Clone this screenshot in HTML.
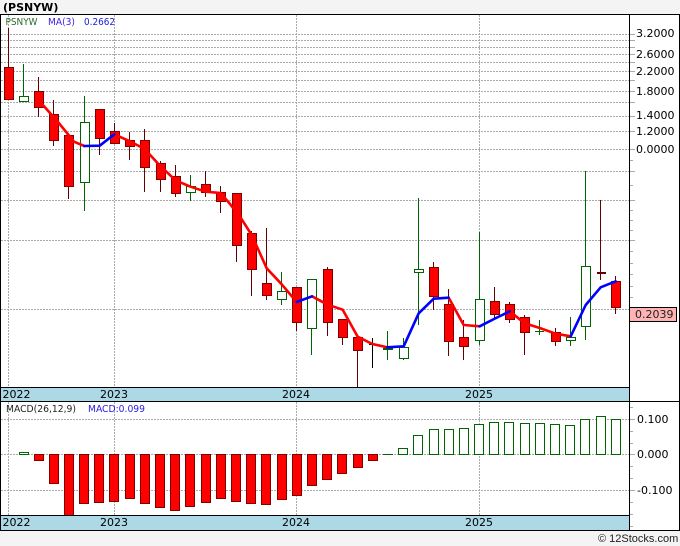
<!DOCTYPE html>
<html>
<head>
<meta charset="utf-8">
<style>
html,body{margin:0;padding:0;width:680px;height:546px;overflow:hidden;background:#f4f4f4}
svg{display:block}
text{font-family:"DejaVu Sans","Liberation Sans",sans-serif;font-size:11px;fill:#000}
.s{font-family:"DejaVu Sans Condensed","DejaVu Sans",sans-serif;font-size:10px}
</style>
</head>
<body>
<svg width="680" height="546" viewBox="0 0 680 546" xmlns="http://www.w3.org/2000/svg">
<rect x="0" y="0" width="680" height="546" fill="#f4f4f4"/>
<rect x="0" y="14" width="680" height="517" fill="#fff"/>
<rect x="0" y="388" width="630" height="13" fill="#add8e6"/>
<rect x="0" y="516" width="630" height="14" fill="#add8e6"/>

<g shape-rendering="crispEdges" fill="none">
<path stroke="#aaa" stroke-dasharray="2 1" d="M1 34.5H630M1 40.5H630M1 47.5H630M1 54.5H630M1 62.5H630M1 71.5H630M1 80.5H630M1 91.5H630M1 102.5H630M1 116.5H630M1 131.5H630M1 149.5H630M1 171.5H630M1 200.5H630M1 240.5H630M1 309.5H630M1 419.5H630M1 454.5H630M1 490.5H630"/>
<path stroke="#aaa" stroke-dasharray="2 1" d="M8.5 15V387M114.5 15V387M296.5 15V387M479.5 15V387M8.5 402V515M114.5 402V515M296.5 402V515M479.5 402V515"/>
<path stroke="#aaa" d="M630 34.5h5M630 40.5h5M630 47.5h5M630 54.5h5M630 62.5h5M630 71.5h5M630 80.5h5M630 91.5h5M630 102.5h5M630 116.5h5M630 131.5h5M630 149.5h5M630 160.5h3M630 171.5h5M630 185.5h3M630 200.5h5M630 210.5h3M630 220.5h3M630 230.5h3M630 240.5h5M630 251.5h3M630 263.5h3M630 274.5h3M630 286.5h3M630 297.5h3M630 309.5h5M630 407.5h3M630 419.5h5M630 431.5h3M630 443.5h3M630 454.5h5M630 466.5h3M630 478.5h3M630 490.5h5M630 502.5h3M630 514.5h3M630 526.5h3"/>

<!-- wicks -->
<path stroke="#660000" d="M8.5 28V99M38.5 77V117M53.5 100V146M68.5 133V199M99.5 109V155M114.5 123V144M129.5 132V160M144.5 129V192M160.5 161V192M175.5 165V197M205.5 171V197M220.5 186V213M236.5 193V262M251.5 231V296M266.5 228V300M296.5 287V331M327.5 267V336M342.5 319V345M357.5 337V387M433.5 262V310M448.5 289V356M463.5 320V360M494.5 287V318M509.5 302V323M524.5 315V355M555.5 328V346M600.5 200V280M615.5 276V314"/>
<path stroke="#006400" d="M23.5 64V96M84.5 96V211M190.5 175V201M281.5 272V305M311.5 279V355M387.5 331V360M403.5 338V360M418.5 198V325M479.5 232V345M539.5 320V335M570.5 317V346M585.5 171V340M535 331.5h9"/>
<path stroke="#000" d="M372.5 338V368M369 344.5h9"/>
<rect x="597" y="272" width="9" height="2" fill="#660000"/>

<!-- price bodies -->
<path fill="#f00" stroke="#800000" d="M4.5 67.5h9v32h-9zM34.5 91.5h9v16h-9zM49.5 114.5h9v26h-9zM64.5 135.5h9v51h-9zM95.5 109.5h9v29h-9zM110.5 131.5h9v12h-9zM125.5 140.5h9v6h-9zM140.5 140.5h9v27h-9zM156.5 163.5h9v16h-9zM171.5 176.5h9v17h-9zM201.5 184.5h9v8h-9zM216.5 192.5h9v9h-9zM232.5 193.5h9v52h-9zM247.5 233.5h9v36h-9zM262.5 283.5h9v12h-9zM292.5 287.5h9v35h-9zM323.5 269.5h9v53h-9zM338.5 319.5h9v18h-9zM353.5 337.5h9v13h-9zM429.5 267.5h9v29h-9zM444.5 304.5h9v37h-9zM459.5 337.5h9v9h-9zM490.5 301.5h9v13h-9zM505.5 304.5h9v15h-9zM520.5 317.5h9v15h-9zM551.5 332.5h9v9h-9zM611.5 281.5h9v26h-9z"/>
<path fill="#fff" stroke="#006400" d="M19.5 96.5h9v5h-9zM80.5 122.5h9v60h-9zM186.5 186.5h9v6h-9zM277.5 291.5h9v8h-9zM307.5 279.5h9v49h-9zM383.5 348.5h9v1h-9zM399.5 347.5h9v11h-9zM414.5 269.5h9v3h-9zM475.5 299.5h9v41h-9zM566.5 337.5h9v3h-9zM581.5 266.5h9v60h-9z"/>

<!-- MACD bars -->
<path fill="#f00" stroke="#800000" d="M34.5 454.5h9v6h-9zM49.5 454.5h9v29h-9zM64.5 454.5h9v61h-9zM79.5 454.5h9v49h-9zM94.5 454.5h9v48h-9zM109.5 454.5h9v47h-9zM125.5 454.5h9v44h-9zM140.5 454.5h9v49h-9zM155.5 454.5h9v53h-9zM170.5 454.5h9v56h-9zM185.5 454.5h9v52h-9zM201.5 454.5h9v48h-9zM216.5 454.5h9v44h-9zM231.5 454.5h9v47h-9zM246.5 454.5h9v49h-9zM261.5 454.5h9v50h-9zM277.5 454.5h9v45h-9zM292.5 454.5h9v41h-9zM307.5 454.5h9v31h-9zM322.5 454.5h9v25h-9zM337.5 454.5h9v19h-9zM353.5 454.5h9v13h-9zM368.5 454.5h9v6h-9z"/>
<path fill="#fff" stroke="#006400" d="M19.5 452.5h9v2h-9zM398.5 448.5h9v6h-9zM413.5 435.5h9v19h-9zM429.5 429.5h9v25h-9zM444.5 429.5h9v25h-9zM459.5 428.5h9v26h-9zM474.5 424.5h9v30h-9zM489.5 422.5h9v32h-9zM504.5 422.5h9v32h-9zM520.5 423.5h9v31h-9zM535.5 423.5h9v31h-9zM550.5 424.5h9v30h-9zM565.5 425.5h9v29h-9zM580.5 419.5h9v35h-9zM596.5 416.5h9v38h-9zM611.5 419.5h9v35h-9z"/>
<path stroke="#006400" d="M383 454.5h10"/>

<!-- frame -->
<path stroke="#000" d="M0 14.5H680M0.5 14V531M629.5 14V531M679.5 14V531M0 387.5H630M0 401.5H680M0 515.5H630M0 530.5H680"/>
<rect x="629.5" y="307.5" width="47" height="14" fill="#ffb3b3" stroke="#000"/>
</g>

<!-- MA line -->
<g fill="none" stroke-width="2.6" stroke-linejoin="round" stroke-linecap="round">
<path stroke="#f00" d="M38.5 100L58 122L74 141.7L84.3 146M114.3 134.3L129.3 141L144.7 149L160 165.7L175.5 180.3L190.5 186.7L205.7 191.7L220.7 193L230 204L241.7 219.3L251.7 235L266.7 268.3L281.7 284.3L296.7 302M312 296.3L327.7 304.7L342.7 309.7L357.7 336.7L372.3 344L387.3 347.3M448.7 297.7L463.7 325L479.7 326.3M509.7 311.3L524.7 323.3L539.7 328L555.7 333.7L570.7 336.3"/>
<path stroke="#0000ff" d="M84.3 146L99.7 145.7L114.3 134.3M296.7 302L312 296.3M387.3 347.3L403.7 346.3L418.7 313.3L433.7 298.7L448.7 297.7M479.7 326.3L495 318.5L509.7 311.3M570.7 336.3L585.7 305L600.7 287.3L615.7 281.3"/>
</g>

<!-- text -->
<text x="3" y="11" style="font-weight:bold">(PSNYW)</text>
<text class="s" x="5.5" y="25" textLength="32" lengthAdjust="spacingAndGlyphs" style="fill:#2a6a2a">PSNYW</text>
<text class="s" x="48" y="25" textLength="27" lengthAdjust="spacingAndGlyphs" style="fill:#3a1fe0">MA(3)</text>
<text class="s" x="84" y="25" textLength="31" lengthAdjust="spacingAndGlyphs" style="fill:#1a1ae0">0.2662</text>
<text class="s" x="6" y="412" textLength="70" lengthAdjust="spacingAndGlyphs" style="fill:#222">MACD(26,12,9)</text>
<text class="s" x="88" y="412" textLength="57" lengthAdjust="spacingAndGlyphs" style="fill:#2a1ae0">MACD:0.099</text>

<text x="636" y="37">3.2000</text>
<text x="636" y="58">2.6000</text>
<text x="636" y="75">2.2000</text>
<text x="636" y="95">1.8000</text>
<text x="636" y="119">1.4000</text>
<text x="636" y="135">1.2000</text>
<text x="636" y="153">0.0000</text>
<text x="635" y="318" style="fill:#222">0.2039</text>

<text x="637" y="423">0.100</text>
<text x="637" y="458">0.000</text>
<text x="637" y="494">-0.100</text>

<text x="2.5" y="398">2022</text>
<text x="100" y="398">2023</text>
<text x="282" y="398">2024</text>
<text x="465" y="398">2025</text>
<text x="2.5" y="526">2022</text>
<text x="100" y="526">2023</text>
<text x="282" y="526">2024</text>
<text x="465" y="526">2025</text>

<text x="598" y="542" style='font-family:"Liberation Sans",sans-serif;fill:#222'>© 12Stocks.com</text>
</svg>
</body>
</html>
